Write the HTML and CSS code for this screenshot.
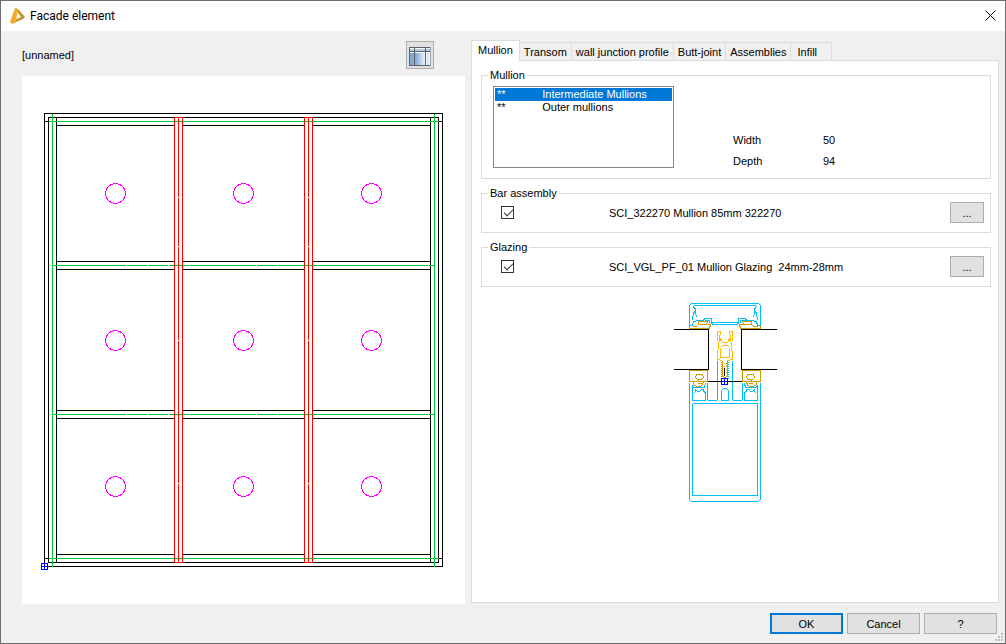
FILE: index.html
```html
<!DOCTYPE html>
<html lang="en">
<head>
<meta charset="utf-8">
<title>Facade element</title>
<link rel="stylesheet" href="styles.css">
</head>
<body>
<div class="window">
  <header class="titlebar">
    <svg class="app-icon" viewBox="0 0 16 18" width="16" height="18" aria-hidden="true">
      <path d="M5 1L8 2L15 10L13 12L4 16L2 17L5 13L11 10L8 6z" fill="#c8912f"/>
      <path d="M5 1L8 2L6 14L2 17L0 15z" fill="#f7a928"/>
    </svg>
    <h1 class="title">Facade element</h1>
    <button class="close" type="button" aria-label="Close">
      <svg viewBox="0 0 11 11" width="11" height="11"><path d="M.5.5l10 10M10.500.5l-10 10" stroke="#000" fill="none"/></svg>
    </button>
  </header>

  <main class="content">
    <section class="preview">
      <div class="preview-head">
        <span>[unnamed]</span>
        <button class="view-button" type="button" aria-label="Element view">
          <svg viewBox="0 0 22 19" width="22" height="19" shape-rendering="crispEdges">
            <defs><linearGradient id="glass"><stop offset="0" stop-color="#7fa3cf"/><stop offset="1" stop-color="#eef3f9"/></linearGradient></defs>
            <rect width="22" height="19" fill="#f6f8fa"/>
            <rect x="1" y="6" width="4" height="12" fill="#86a9d2"/>
            <rect x="6" y="6" width="10" height="12" fill="url(#glass)"/>
            <rect x="1" y="2" width="20" height="2" fill="#b9cbe0"/>
            <rect x="18" y="6" width="2" height="12" fill="#dde6f0"/>
            <path d="M0 .5H22M0 4.500H22M0 18.500H22M.5 0V19M5.500 1V19M16.500 1V19" stroke="#5a6470" fill="none"/>
            <path d="M21.500 0V19" stroke="#9aa3ad"/>
          </svg>
        </button>
      </div>
      <div class="canvas">
        <svg class="drawing" viewBox="22 76 443 528" role="img" aria-label="Facade elevation">
          <g transform="translate(.5 .5)" fill="none" shape-rendering="crispEdges">
            <g stroke="#000">
              <path d="M44 113H442V566H44z M48 117H438V562H48z"/>
              <path d="M56 117V562M430 117V562M44 121H48M438 121H442M44 558H48M438 558H442"/>
              <path d="M56 125H174M182 125H304M312 125H430M56 261H174M182 261H304M312 261H430M56 269H174M182 269H304M312 269H430"/>
              <path d="M56 410H174M182 410H304M312 410H430M56 418H174M182 418H304M312 418H430M56 554H174M182 554H304M312 554H430"/>
            </g>
            <path stroke="#00c832" d="M52 113V566M434 113V566M48 121H438M48 558H438M52 265H434M52 414H434"/>
            <path stroke="#fff" d="M125 265h1M146 265h1M167 265h1M188 265h1M255 265h1M276 265h1M427 265h1M125 414h1M146 414h1M167 414h1M188 414h1M255 414h1M276 414h1M427 414h1"/>
            <path stroke="#f00" d="M174 117H182V562H174z M178 117V562 M304 117H312V562H304z M308 117V562"/>
            <path stroke="#fff" d="M178 196v1M308 196v1M178 245v1M308 245v1M178 339v1M308 339v1M178 482v1M308 482v1"/>
            <g stroke="#f0f">
              <circle cx="115" cy="193" r="10"/><circle cx="243" cy="193" r="10"/><circle cx="371" cy="193" r="10"/>
              <circle cx="115" cy="340" r="10"/><circle cx="243" cy="340" r="10"/><circle cx="371" cy="340" r="10"/>
              <circle cx="115" cy="486" r="10"/><circle cx="243" cy="486" r="10"/><circle cx="371" cy="486" r="10"/>
            </g>
            <path stroke="#00f" d="M41 563H47V569H41zM44 563V569M41 566H47"/>
          </g>
        </svg>
      </div>
    </section>

    <section class="settings">
      <div class="tabs" role="tablist">
        <button class="tab active" type="button" role="tab" aria-selected="true">Mullion</button>
        <button class="tab" type="button" role="tab">Transom</button>
        <button class="tab" type="button" role="tab">wall junction profile</button>
        <button class="tab" type="button" role="tab">Butt-joint</button>
        <button class="tab" type="button" role="tab">Assemblies</button>
        <button class="tab last" type="button" role="tab">Infill</button>
      </div>
      <div class="panel" role="tabpanel">
        <fieldset class="group mullion">
          <legend>Mullion</legend>
          <select class="list" size="6" aria-label="Mullion type">
            <option selected>**&nbsp;&nbsp;&nbsp;&nbsp;&nbsp;&nbsp;&nbsp;&nbsp;&nbsp;&nbsp;&nbsp;&nbsp;Intermediate Mullions</option>
            <option>**&nbsp;&nbsp;&nbsp;&nbsp;&nbsp;&nbsp;&nbsp;&nbsp;&nbsp;&nbsp;&nbsp;&nbsp;Outer mullions</option>
          </select>
          <dl class="dims">
            <dt>Width</dt><dd>50</dd>
            <dt>Depth</dt><dd>94</dd>
          </dl>
        </fieldset>
        <fieldset class="group row">
          <legend>Bar assembly</legend>
          <input class="check" type="checkbox" id="bar" checked>
          <label class="name" for="bar">SCI_322270 Mullion 85mm 322270</label>
          <button class="button more" type="button" aria-label="Choose bar assembly">...</button>
        </fieldset>
        <fieldset class="group row">
          <legend>Glazing</legend>
          <input class="check" type="checkbox" id="glazing" checked>
          <label class="name" for="glazing">SCI_VGL_PF_01 Mullion Glazing&nbsp; 24mm-28mm</label>
          <button class="button more" type="button" aria-label="Choose glazing">...</button>
        </fieldset>
        <div class="section-view">
          <svg viewBox="672 302 106 202" width="106" height="202" role="img" aria-label="Mullion section">
            <defs>
              <g id="half">
                <g stroke="#00bfff">
                  <path d="M725 303H691L689 305V325H692L693 321L698 320H703L704 318H711V323L713 324H725"/>
                  <path d="M725 305H694L692 307M693 307L695 308V311L693 312L692 320M695 312L696 317M704 320H709V322M711 321L712 322H725"/>
                  <path d="M689 382V499L691 501H725M692 403V495H725M692 403H725"/>
                  <path d="M692 384V400H705V392L703 391V389H701L699 391H697L695 389V391L693 393M692 386L694 387H704L705 383M707 382V399L708 400H716L717 399V360"/>
                  <path d="M721 400V390L723 388H725M721 400H725"/>
                  <path d="M721 361V379" stroke-dasharray="1 1"/>
                </g>
                <g stroke="#d09a00">
                  <path d="M689 325V328H709L710 324H707M692 326H696L698 324V321H707L706 324H699"/>
                  <path d="M689 370H707V381H703L702 385L699 386H696L693 384V381H689z"/>
                  <path d="M696 374H702L703 377L701 379H697L695 377zM693 381H703M697 383H701M698 379V381"/>
                </g>
                <path stroke="#ffbf00" d="M725 342H722L719 338V341L718 342L717 358V359L722 360M717 340V331H720V334L719 335V337L722 341M720 347L722 345H725M720 347V357H725"/>
                <path stroke="#d09a00" d="M722 360V376L725 377M723 363H724M723 366H724M723 369H724M723 372H724"/>
              </g>
            </defs>
            <g transform="translate(.5 .5)" fill="none" shape-rendering="crispEdges">
              <use href="#half"/>
              <use href="#half" transform="translate(1449 0) scale(-1 1)"/>
              <path stroke="#000" d="M673 329H708V369H673M776 329H741V369H776M707 381H741M724 367V375"/>
              <path stroke="#00f" d="M721 378H727V384H721zM724 378V384M721 381H727"/>
            </g>
          </svg>
        </div>
      </div>
    </section>
  </main>

  <footer class="actions">
    <button class="button default" type="button">OK</button>
    <button class="button" type="button">Cancel</button>
    <button class="button" type="button">?</button>
    <svg class="grip" viewBox="0 0 8 8" width="8" height="8" aria-hidden="true"><path fill="#bfbfbf" d="M6 0h2v2H6zM6 3h2v2H6zM3 3h2v2H3zM6 6h2v2H6zM3 6h2v2H3zM0 6h2v2H0z"/></svg>
  </footer>
</div>
</body>
</html>
```
FILE: styles.css
```css
* { box-sizing: border-box; }
body, h1, dl, dd { margin: 0; }
body, button, select, input {
  font: 11px/14px "Liberation Sans", Arial, sans-serif;
  color: #000;
}
.window {
  position: relative;
  display: flex;
  flex-direction: column;
  min-height: 100vh;
  border: 1px solid #6e6e6e;
  background: #f0f0f0;
}
.titlebar {
  display: flex;
  align-items: center;
  gap: 4px;
  height: 30px;
  padding: 0 9px;
  background: #fff;
}
.title {
  flex: 1;
  font: 12px/16px Roboto, "Open Sans", sans-serif;
}
.close { padding: 0 0 2px; border: 0; background: none; line-height: 0; }
.content {
  flex: 1;
  display: grid;
  grid-template-columns: 443fr 528fr;
  gap: 6px;
  padding: 0 6px 0 21px;
}
.preview { display: flex; flex-direction: column; }
.preview-head {
  display: flex;
  align-items: center;
  justify-content: space-between;
  height: 45px;
  padding: 3px 31px 0 0;
}
.view-button {
  display: grid;
  place-items: center;
  width: 28px;
  height: 28px;
  padding: 3px 0 0;
  border: 1px solid #adadad;
  background: #e1e1e1;
}
.canvas { background: #fff; }
.drawing { display: block; width: 100%; }
.settings { display: flex; flex-direction: column; padding-top: 9px; }
.tabs { display: flex; align-items: flex-end; }
.tab {
  height: 18px;
  padding: 0 4px;
  border: 1px solid #dcdcdc;
  border-width: 1px 1px 0 0;
  background: #f0f0f0;
  white-space: nowrap;
}
.tab.active {
  z-index: 1;
  height: 21px;
  margin-bottom: -1px;
  padding: 0 6px 2px;
  border-left-width: 1px;
  background: #fff;
}
.tab.last { padding: 0 14px 0 6px; }
.panel {
  flex: 1;
  display: flex;
  flex-direction: column;
  gap: 7px;
  margin-bottom: 1px;
  padding: 7px 7px 0 9px;
  border: 1px solid #dcdcdc;
  background: #fff;
}
.group {
  display: flex;
  min-width: 0;
  margin: 0;
  padding: 0 6px 0 11px;
  border: 1px solid #dcdcdc;
}
.group legend { margin-left: -5px; padding: 0 2px; }
.mullion { height: 111px; padding-bottom: 9px; }
.list {
  width: 181px;
  height: 82px;
  margin-top: 4px;
  padding: 1px;
  border: 1px solid #828790;
  border-radius: 0;
  outline: 0;
  background: #fff;
  overflow: hidden;
}
.list option { min-height: 13px; padding: 0 2px; line-height: 13px; }
.list option:checked {
  background: #0078d7 linear-gradient(#0078d7, #0078d7);
  color: #fff;
  -webkit-text-fill-color: #fff;
}
.dims {
  display: grid;
  grid-template-columns: 90px 60px;
  row-gap: 7px;
  align-content: end;
  padding: 0 0 0 59px;
}
.row { align-items: center; height: 47px; padding-top: 2px; }
.row .name { flex: 1; margin-left: 95px; }
.check {
  appearance: none;
  width: 13px;
  height: 13px;
  margin: 0 0 0 8px;
  border: 1px solid #333;
  background: #fff;
}
.check:checked::before {
  content: "";
  display: block;
  width: 8px;
  height: 4px;
  margin: 2px 0 0 2px;
  border: solid #333;
  border-width: 0 0 1px 1px;
  transform: rotate(-45deg);
}
.button {
  width: 73px;
  height: 21px;
  padding: 0;
  border: 1px solid #adadad;
  background: #e1e1e1;
}
.button.default { border: 2px solid #0078d7; }
.button.more { width: 34px; }
.section-view { display: flex; justify-content: center; padding: 8px 22px 0 0; }
.actions {
  display: flex;
  justify-content: flex-end;
  gap: 4px;
  padding: 9px 8px;
}
.grip { position: absolute; right: 2px; bottom: 2px; }
```
